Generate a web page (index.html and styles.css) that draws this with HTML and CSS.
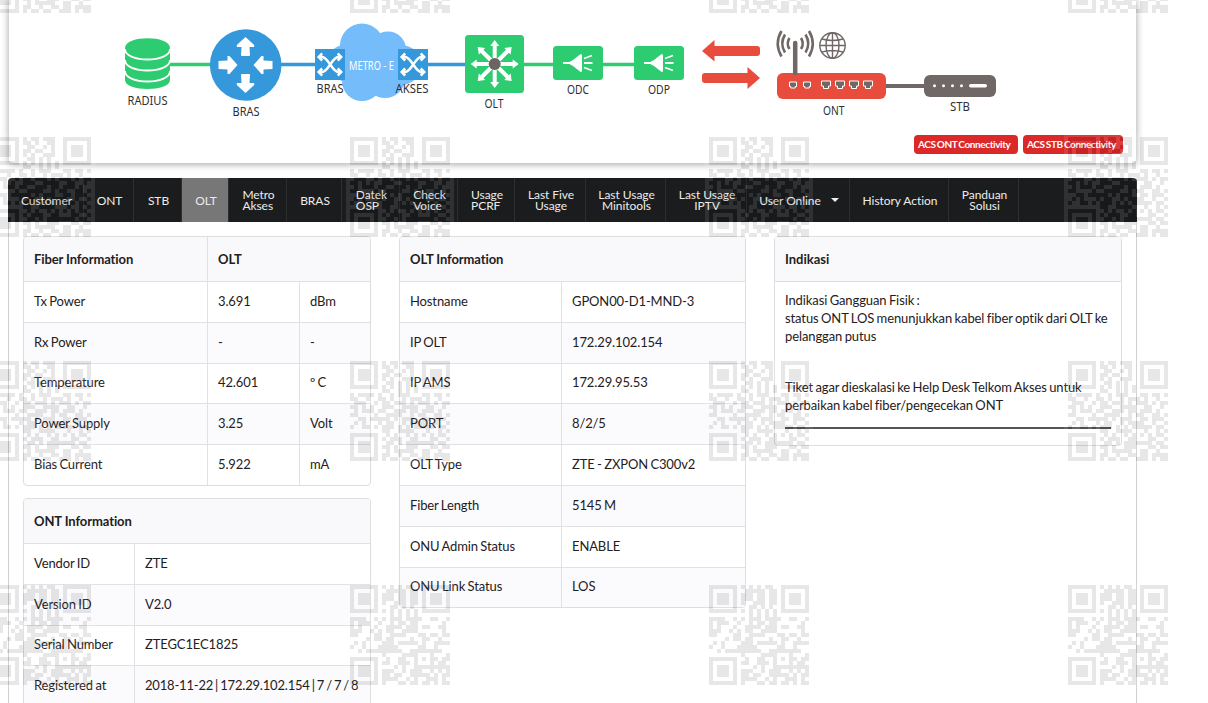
FILE: index.html
```html
<!DOCTYPE html>
<html lang="id">
<head>
<meta charset="utf-8">
<title>OLT Information</title>
<link rel="stylesheet" href="styles.css">
</head>
<body>
<div class="page">
<section class="topology">
<svg class="diagram" viewBox="9 0 1127 135" width="1127" height="135">
  <defs>
    <g id="shuffle" fill="none" stroke="#fff" stroke-width="2.5">
      <path d="M4 8H7C13 8 17 23 23 23H25M4 23H7C13 23 17 8 23 8H25"/>
      <path d="M7 4.500L3.500 8L7 11.500M7 19.500L3.500 23L7 26.500M22.500 4.500L26 8L22.500 11.500M22.500 19.500L26 23L22.500 26.500"/>
    </g>
    <g id="splitter">
      <rect width="50" height="34" rx="3.5" fill="#2ecc71"/>
      <path d="M10 17H18" stroke="#fff" stroke-width="2"/>
      <path d="M17 15.5L20 14L27 8.5Q29 7 29 10V24Q29 27 27 25.5L20 20L17 18.5Z" fill="#fff"/>
      <path d="M31 12.5L39 9.5M31 17H39.5M31 21.5L39 24.5" stroke="#fff" stroke-width="1.8"/>
    </g>
    <path id="ray" d="M-2 0V-18H-4.5L0 -24L4.5 -18H2V0Z" fill="#fff"/>
    <path id="arrow" d="M-4.5 -10Q-4.5 -9 -3.500 -9H3.500Q4.500 -9 4.500 -10L4 -18H8.7V-20L0 -28L-8.7 -20V-18H-4Z" fill="#fff"/>
    <path id="port" d="M0 0H9V5H7V7.5H2V5H0Z" fill="#6f6867" stroke="#fff"/>
    <path id="phone" d="M0 0.500H7V5H5.7V6.5H1.3V5H0Z" fill="#6f6867" stroke="#fff"/>
  </defs>
  <path d="M170 64.5H211M524 64.5H553M603 64.5H634" stroke="#2ecc71" stroke-width="3.5"/>
  <path d="M280 64.5H315M428 64.5H465" stroke="#3498db" stroke-width="3.5"/>
  <path d="M125 48V80C125 92 170 92 170 80V48C170 35 125 35 125 48Z" fill="#2ecc71"/>
  <path d="M125 49C125 63 170 63 170 49M125 60C125 74 170 74 170 60M125 71C125 85 170 85 170 71" fill="none" stroke="#fff" stroke-width="1.8"/>
  <circle cx="245.7" cy="65" r="35.8" fill="#3498db"/>
  <g transform="translate(245.5 65)">
    <use href="#arrow"/><use href="#arrow" transform="rotate(180)"/>
    <path d="M-27 -4L-18 -4.5V-9H-16L-8 0L-16 9H-18V4.5L-27 4ZM27 -4L18 -4.5V-9H16L8 0L16 9H18V4.5L27 4Z" fill="#fff"/>
  </g>
  <g fill="#75bcfb"><circle cx="362" cy="45.5" r="22"/><circle cx="388" cy="49.5" r="18"/><circle cx="345" cy="63" r="18"/><circle cx="362" cy="81" r="20"/><circle cx="385" cy="78" r="20"/><circle cx="401" cy="65" r="20"/></g>
  <rect x="315" y="49" width="30" height="31" fill="#3498db"/><use href="#shuffle" x="315.2" y="49"/>
  <rect x="398" y="49" width="30" height="31" fill="#3498db"/><use href="#shuffle" x="398.2" y="49"/>
  <text class="metro" x="349" y="69.5" textLength="45" lengthAdjust="spacingAndGlyphs">METRO - E</text>
  <rect x="465" y="35" width="59" height="58" rx="3.5" fill="#2ecc71"/>
  <g transform="translate(494.7 64)">
    <use href="#ray"/><use href="#ray" transform="rotate(45)"/><use href="#ray" transform="rotate(90)"/><use href="#ray" transform="rotate(135)"/><use href="#ray" transform="rotate(180)"/><use href="#ray" transform="rotate(225)"/><use href="#ray" transform="rotate(270)"/><use href="#ray" transform="rotate(315)"/>
    <circle r="6" fill="#6b6460"/>
  </g>
  <use href="#splitter" x="553" y="46"/><use href="#splitter" x="634" y="46"/>
  <g fill="#e74c3c">
    <path d="M702 51L714.5 40V46H757Q760 46 760 49V53Q760 56 757 56H714.5V61.5Z"/>
    <path d="M760 78L747.5 67V73H705Q702 73 702 76V80Q702 83 705 83H747.5V89Z"/>
    <rect x="777" y="73" width="109" height="26" rx="6"/>
  </g>
  <path d="M886 86H924" stroke="#6f6867" stroke-width="4"/>
  <g fill="none" stroke="#6f6867">
    <path d="M795.2 73V43" stroke-width="4.5" stroke-linecap="round"/>
    <path d="M789.5 38Q786 43.5 789.5 49M801 38Q804.5 43.5 801 49M785 34.5Q779.500 43.500 785 52.500M805.500 34.500Q811 43.500 805.500 52.500M781.500 31Q774 43.500 781.500 56.500M809 31Q816.500 43.500 809 56.500" stroke-width="2.6"/>
    <g stroke-width="1.4"><circle cx="832.5" cy="45.5" r="12.7"/><ellipse cx="832.5" cy="45.5" rx="6.500" ry="12.700"/><path d="M832.500 33V58M820 45.500H845M822 39Q832.500 42 843 39M822 52Q832.500 49 843 52"/></g>
  </g>
  <use href="#phone" x="789.5" y="81.500"/><use href="#phone" x="803.500" y="81.500"/>
  <use href="#port" x="821.500" y="81"/><use href="#port" x="835.500" y="81"/><use href="#port" x="849.500" y="81"/><use href="#port" x="863.500" y="81"/>
  <rect x="924" y="75" width="72" height="22" rx="6" fill="#6f6867"/>
  <g fill="#fff"><circle cx="934.5" cy="85.700" r="1.500"/><circle cx="943.500" cy="85.700" r="1.500"/><circle cx="952.500" cy="85.700" r="1.500"/><circle cx="961.500" cy="85.700" r="1.500"/><rect x="969" y="84" width="18" height="3.400" rx="1.700"/></g>
  <g class="device">
    <text x="127.500" y="105" textLength="40" lengthAdjust="spacingAndGlyphs">RADIUS</text>
    <text x="232.500" y="116" textLength="27" lengthAdjust="spacingAndGlyphs">BRAS</text>
    <text x="316.500" y="93" textLength="27" lengthAdjust="spacingAndGlyphs">BRAS</text>
    <text x="395.500" y="93" textLength="33" lengthAdjust="spacingAndGlyphs">AKSES</text>
    <text x="484.500" y="108" textLength="19" lengthAdjust="spacingAndGlyphs">OLT</text>
    <text x="567" y="94" textLength="22" lengthAdjust="spacingAndGlyphs">ODC</text>
    <text x="648" y="94" textLength="22" lengthAdjust="spacingAndGlyphs">ODP</text>
    <text x="823" y="115" textLength="21.500" lengthAdjust="spacingAndGlyphs">ONT</text>
    <text x="950" y="111" textLength="20" lengthAdjust="spacingAndGlyphs">STB</text>
  </g>
</svg>
<div class="actions"><a class="label ont">ACS ONT Connectivity</a><a class="label stb">ACS STB Connectivity</a></div>
</section>
<nav class="menu">
  <a>Customer</a><a>ONT</a><a>STB</a><a class="active">OLT</a><a class="left">Metro<br>Akses</a><a>BRAS</a><a class="left">Datek<br>OSP</a><a class="left">Check<br>Voice</a><a class="left">Usage<br>PCRF</a><a>Last Five<br>Usage</a><a>Last Usage<br>Minitools</a><a>Last Usage<br>IPTV</a><a class="dropdown">User Online<i class="caret"></i></a><a>History Action</a><a>Panduan<br>Solusi</a>
</nav>
<main class="content">
  <div class="column">
    <table class="grid fiber">
      <colgroup><col class="c-name"><col class="c-value"><col></colgroup>
      <thead><tr><th>Fiber Information</th><th colspan="2">OLT</th></tr></thead>
      <tbody>
        <tr><td>Tx Power</td><td>3.691</td><td>dBm</td></tr>
        <tr><td>Rx Power</td><td>-</td><td>-</td></tr>
        <tr><td>Temperature</td><td>42.601</td><td>º C</td></tr>
        <tr><td>Power Supply</td><td>3.25</td><td>Volt</td></tr>
        <tr><td>Bias Current</td><td>5.922</td><td>mA</td></tr>
      </tbody>
    </table>
    <table class="grid ont-info">
      <colgroup><col class="c-name"><col></colgroup>
      <thead><tr><th colspan="2">ONT Information</th></tr></thead>
      <tbody>
        <tr><td>Vendor ID</td><td>ZTE</td></tr>
        <tr><td>Version ID</td><td>V2.0</td></tr>
        <tr><td>Serial Number</td><td>ZTEGC1EC1825</td></tr>
        <tr><td>Registered at</td><td class="registered">2018-11-22 | 172.29.102.154 | 7 / 7 / 8</td></tr>
      </tbody>
    </table>
  </div>
  <div class="column">
    <table class="grid olt-info">
      <colgroup><col class="c-name"><col></colgroup>
      <thead><tr><th colspan="2">OLT Information</th></tr></thead>
      <tbody>
        <tr><td>Hostname</td><td>GPON00-D1-MND-3</td></tr>
        <tr><td>IP OLT</td><td>172.29.102.154</td></tr>
        <tr><td>IP AMS</td><td>172.29.95.53</td></tr>
        <tr><td>PORT</td><td>8/2/5</td></tr>
        <tr><td>OLT Type</td><td>ZTE - ZXPON C300v2</td></tr>
        <tr><td>Fiber Length</td><td>5145 M</td></tr>
        <tr><td>ONU Admin Status</td><td>ENABLE</td></tr>
        <tr><td>ONU Link Status</td><td>LOS</td></tr>
      </tbody>
    </table>
  </div>
  <div class="column">
    <section class="indication">
      <h2>Indikasi</h2>
      <div class="body">
        <p>Indikasi Gangguan Fisik :<br>status ONT LOS menunjukkan kabel fiber optik dari OLT ke<br>pelanggan putus</p>
        <p class="ticket">Tiket agar dieskalasi ke Help Desk Telkom Akses untuk<br>perbaikan kabel fiber/pengecekan ONT</p>
      </div>
    </section>
  </div>
</main>
</div>
<svg class="watermark" id="watermark" width="1208" height="703"></svg>
<script src="watermark.js"></script>
</body>
</html>
```
FILE: styles.css
```css
* { box-sizing: border-box; }
html, body { margin: 0; height: 703px; overflow: hidden; }
body { position: relative; background: #fff; color: #1f2021; font: 13px/18px Lato, sans-serif; }
.page { width: 1129px; height: 703px; margin-left: 8px; display: flex; flex-direction: column; }
.topology { flex: none; height: 163px; margin: 0 1px 15px; border-radius: 0 0 4px 4px; background: #fff; box-shadow: 0 1px 6px 1px rgba(70, 55, 75, .4); }
.diagram { display: block; }
.device { font: 12px "Noto Sans", sans-serif; fill: #303033; }
.metro { font: 12px "Noto Sans", sans-serif; fill: #fff; }
.actions { display: flex; justify-content: flex-end; gap: 5px; padding-right: 13px; }
.label { height: 19px; padding-left: 4px; border-radius: 4px; background: #db2828; color: #fff; font: bold 10px/19px Lato, sans-serif; letter-spacing: -.4px; word-spacing: -.8px; white-space: nowrap; }
.label.ont { width: 104px; }
.label.stb { width: 100px; }
.menu { flex: none; height: 44px; display: grid; grid-template-columns: 76px 50px 48px 47px 58px 55px 58px 58px 57px 71px 80px 81px 103px 99px 70px; border-radius: 4px 4px 0 0; background: #1b1c1d; color: #ececec; overflow: hidden; font-size: 12px; line-height: 11px; }
.menu a { display: flex; align-items: center; justify-content: center; padding-left: 2px; text-align: center; letter-spacing: -.05px; border-right: 1px solid #2d2e2f; white-space: nowrap; }
.menu .left { text-align: left; }
.menu .active { background: #777; }
.caret { width: 0; height: 0; margin-left: 10px; border: 4px solid transparent; border-top-color: #eee; border-bottom: 0; }
.content { flex: 1; min-height: 0; display: grid; grid-template-columns: 348px 347px 348px; column-gap: 28px; padding: 14px 14px 0; border: solid #cfcfd1; border-width: 0 1px; overflow: hidden; }
.column { display: flex; flex-direction: column; gap: 12px; }
.grid { width: 100%; flex: none; table-layout: fixed; border-collapse: separate; border-spacing: 0; border: 1px solid #dddddf; border-radius: 4px; overflow: hidden; background: #fff; }
.grid th { height: 44px; padding: 0 10px; text-align: left; background: #f9f9fb; font-weight: bold; letter-spacing: -.1px; }
.grid td { height: 40.8px; padding: 0 10px 2px; border-top: 1px solid #e1e1e3; letter-spacing: -.12px; word-spacing: -.8px; white-space: nowrap; }
.grid th + th, .grid td + td { border-left: 1px solid #e1e1e3; }
.grid tbody tr:nth-child(even) { background: #fbfafc; }
.grid td.registered { letter-spacing: -.19px; word-spacing: -1.1px; }
.fiber .c-name { width: 183px; }
.fiber .c-value { width: 92px; }
.ont-info .c-name { width: 110px; }
.olt-info .c-name { width: 161px; }
.indication { height: 210px; border: 1px solid #dddddf; border-radius: 4px; }
.indication h2 { height: 45px; margin: 0; padding: 0 10px; background: #f9f9fb; border-bottom: 1px solid #dddddf; font: bold 13px/44px Lato, sans-serif; }
.body { margin: 9px 10px 0; padding-bottom: 13px; border-bottom: 2px solid #555; letter-spacing: -.1px; word-spacing: -.8px; white-space: nowrap; }
.body p { margin: 0; }
.body .ticket { margin-top: 33px; }
.watermark { position: absolute; left: 0; top: 0; opacity: .09; pointer-events: none; }
```
FILE: watermark.js
```javascript
// Each string is one row of 25 modules; '#' is a dark module.
const codeA = [
  '#######.#.##.###..#######','#.....#.##.#..##..#.....#','#.###.#..##..#.#..#.###.#','#.###.#.##.##..#..#.###.#','#.###.#.#.#..###..#.###.#','#.....#..##.#.#...#.....#','#######.#.#.#.#.#.#######','........##..#.#.#........',
  '#.####.#..#.###...##.##.#','##..#..##.#..#.###.#..#..','.###..#.##.###.#.###.#.##','##.#.#..###..####..##..#.','.#.###.##..###.##.###.#..','##....#..####..#.##..##.#','..##.#####.#.###..##.###.','.#.#...#.##..#.####..#..#','#..##.#.###.#.#.#####.##.',
  '........##..####...#..#.#','#######..#.#..#.#.#.#.##.','#.....#.#.###..##...##..#','#.###.#..##.#.#######.##.','#.###.#.##.#..###...##.##','#.###.#..#.#####..##..#..','#.....#.##..#..##.##.####','#######.#.##.##..###.#.##'
];
const codeB = [
  '#######.#.#.#.##..#######','#.....#..#####.##.#.....#','#.###.#.###.##.##.#.###.#','#.###.#.###.##.##.#.###.#','#.###.#.#..###.##.#.###.#','#.....#...##.#.#..#.....#','#######.#.#.#.#.#.#######','..........#.#.#.#........',
  '####..#.#.###.####..##..#','#.###..#..#.##.##......#.','#.#...#..####.###.##..##.','###..#.#.##..####......#.','##....##..####...##.##.##','....#.##.##....#..##..#..','.#.#....###.#####.#..####','#..#...#####.....##..#...','..#.#########..########..',
  '........#....####...#...#','#######..#..##..#.#.##.##','#.....#.##..###.#...#.##.','#.###.#....#.#..#########','#.###.#.###..#.###..#.#.#','#.###.#.##.##..#####.#.##','#.....#.####..#.#..###.#.','#######.#...##.##.##.#.##'
];
function modules(rows, x, y) {
  let d = '';
  rows.forEach((row, r) => [...row].forEach((cell, c) => {
    if (cell === '#') d += `M${x + c * 4} ${y + r * 4}h4v4h-4z`;
  }));
  return d;
}
let quiet = '', dark = '';
[-87, 137, 361, 585].forEach((y, row) => {
  [-9, 350, 709, 1068].forEach(x => {
    quiet += `M${x - 4} ${y - 4}h108v108h-108z`;
    dark += modules(row === 3 ? codeB : codeA, x, y);
  });
});
document.getElementById('watermark').innerHTML =
  `<path fill="#fff" d="${quiet}"/><path fill="#000" shape-rendering="crispEdges" d="${dark}"/>`;
```
